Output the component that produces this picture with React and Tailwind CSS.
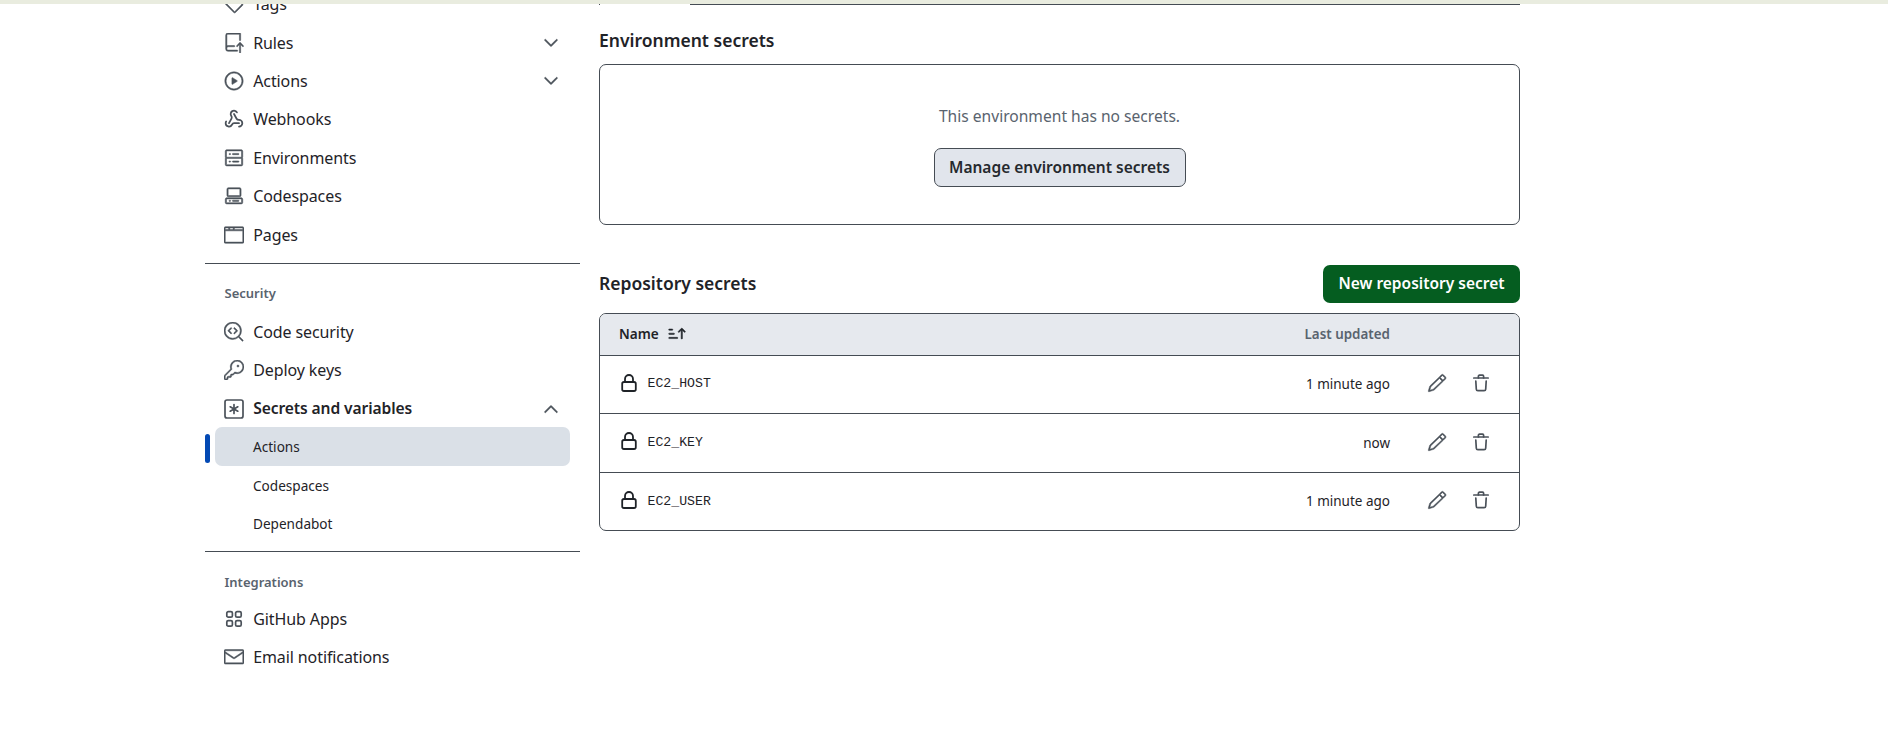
import React from "react";
import {
  GoTag, GoRepoPush, GoPlay, GoServer, GoCodespaces, GoBrowser,
  GoCodescan, GoKey, GoMail, GoChevronDown, GoChevronUp,
  GoPencil, GoSortAsc,
} from "react-icons/go";

const font = "font-['Noto_Sans','Open_Sans',sans-serif]";

function GoWebhook({ className }) {
  return (
    <svg viewBox="0 0 24 24" fill="none" stroke="currentColor" className={className}>
      <g strokeWidth="2.1" strokeLinecap="round" strokeLinejoin="round">
        <path d="M18 16.98h-5.99c-1.1 0-1.95.94-2.48 1.9A4 4 0 0 1 2 17c.01-.7.2-1.4.57-2" />
        <path d="m6 17 3.13-5.78c.53-.97.1-2.18-.5-3.1a4 4 0 1 1 6.89-4.06" />
        <path d="m12 6 3.13 5.73C15.66 12.7 16.9 13 18 13a4 4 0 0 1 0 8" />
      </g>
    </svg>
  );
}

function GoKeyAsterisk({ className }) {
  return (
    <svg viewBox="0 0 20 20" fill="none" stroke="currentColor" className={className}>
      <rect x="1" y="1" width="18" height="18" rx="2" strokeWidth="1.7" />
      <path d="M10 5.6v8.8M6.2 7.8l7.6 4.4M13.8 7.8l-7.6 4.4" strokeWidth="1.7" strokeLinecap="round" />
    </svg>
  );
}

function GoApps({ className }) {
  return (
    <svg viewBox="0 0 20 20" fill="none" stroke="currentColor" className={className}>
      <g strokeWidth="1.7">
        <rect x="2.8" y="2.6" width="5.6" height="5.6" rx="1.5" />
        <rect x="11.6" y="2.6" width="5.6" height="5.6" rx="1.5" />
        <rect x="2.8" y="11.6" width="5.6" height="5.6" rx="1.5" />
        <rect x="11.6" y="11.6" width="5.6" height="5.6" rx="1.5" />
      </g>
    </svg>
  );
}

function TrashIcon({ className }) {
  return (
    <svg viewBox="0 0 20 20" fill="none" stroke="currentColor" className={className}>
      <g strokeWidth="1.7" strokeLinecap="round" strokeLinejoin="round">
        <path d="M2.8 5h14.4" />
        <path d="M7.4 5V3.2a1 1 0 0 1 1-1h3.2a1 1 0 0 1 1 1V5" />
        <path d="M4.8 8l.5 8.2a1.6 1.6 0 0 0 1.6 1.5h6.2a1.6 1.6 0 0 0 1.6-1.5L15.2 8" />
      </g>
    </svg>
  );
}

function LockIcon({ className }) {
  return (
    <svg viewBox="0 0 20 20" fill="none" stroke="currentColor" className={className}>
      <g strokeWidth="1.8" strokeLinejoin="round">
        <rect x="3.2" y="9" width="13.6" height="9" rx="1.8" />
        <path d="M6 9V6a4 4 0 0 1 8 0v3" />
      </g>
    </svg>
  );
}

const thick = "[stroke-width:0.6]";

function Item({ icon: Icon, label, chevron, bold }) {
  return (
    <div className="flex h-[38.4px] items-center pl-[18.6px] pr-[18.5px]">
      <Icon className={`w-[20px] h-[20px] text-[#4b525a] shrink-0 ${thick}`} />
      <span className={`ml-[9.6px] flex-1 text-[#1f2328] ${bold ? "font-semibold text-[15.6px] tracking-[-0.1px]" : "text-[16px] tracking-[-0.1px]"}`}>{label}</span>
      {chevron === "down" && <GoChevronDown className={`w-[22px] h-[22px] text-[#4b525a] ${thick}`} />}
      {chevron === "up" && <GoChevronUp className={`w-[22px] h-[22px] text-[#4b525a] ${thick}`} />}
    </div>
  );
}

function SubItem({ label, active }) {
  return (
    <div className="relative h-[38.4px] flex items-center">
      {active && <div className="absolute left-0 top-[7px] w-[5px] h-[29px] rounded-[3px] bg-[#0349b4]" />}
      <div className={`ml-[10px] mr-[10px] flex-1 h-[39px] flex items-center rounded-[7px] pl-[38px] pt-[3px] text-[13.6px] text-[#1f2328] ${active ? "bg-[#dae0e7]" : ""}`}>{label}</div>
    </div>
  );
}

function SectionLabel({ children }) {
  return <div className="h-[38.4px] flex items-center pl-[19.5px] text-[13px] font-semibold text-[#59636e]">{children}</div>;
}

const secrets = [
  { name: "EC2_HOST", when: "1 minute ago" },
  { name: "EC2_KEY", when: "now" },
  { name: "EC2_USER", when: "1 minute ago" },
];

function Row({ name, when }) {
  return (
    <div className="flex h-[58.6px] items-center border-t border-[#454c54]">
      <LockIcon className="ml-[19px] w-[20px] h-[20px] text-[#1f2328] mb-[3px]" />
      <span className="ml-[8.5px] flex-1 font-['Liberation_Mono',monospace] text-[13.2px] text-[#1f2328]">{name}</span>
      <span className="text-[13.5px] text-[#1f2328]">{when}</span>
      <div className="ml-[37px] mr-[28px] flex items-center gap-[24px] mb-[2px]">
        <GoPencil className={`w-[20px] h-[20px] text-[#4b525a] ${thick}`} />
        <TrashIcon className="w-[20px] h-[20px] text-[#4b525a]" />
      </div>
    </div>
  );
}

export default function App() {
  return (
    <div className={`h-[739px] overflow-hidden bg-white ${font}`}>
      <div className="relative z-10 h-[4px] bg-[#e9ecdf]" />
      <div className="flex -mt-[18px] pl-[205px]">
        <aside className="w-[375px] shrink-0 -mt-[1px]">
          <Item icon={GoTag} label="Tags" />
          <Item icon={GoRepoPush} label="Rules" chevron="down" />
          <Item icon={GoPlay} label="Actions" chevron="down" />
          <Item icon={GoWebhook} label="Webhooks" />
          <Item icon={GoServer} label="Environments" />
          <Item icon={GoCodespaces} label="Codespaces" />
          <Item icon={GoBrowser} label="Pages" />
          <div className="mt-[9.6px] border-t border-[#454c54]" />
          <div className="mt-[10px]"><SectionLabel>Security</SectionLabel></div>
          <Item icon={GoCodescan} label="Code security" />
          <Item icon={GoKey} label="Deploy keys" />
          <Item icon={GoKeyAsterisk} label="Secrets and variables" chevron="up" bold />
          <div className="-mt-[1px]"><SubItem label="Actions" active /></div>
          <SubItem label="Codespaces" />
          <SubItem label="Dependabot" />
          <div className="mt-[9px] border-t border-[#454c54]" />
          <div className="mt-[11px]"><SectionLabel>Integrations</SectionLabel></div>
          <div className="-mt-[2px]">
            <Item icon={GoApps} label="GitHub Apps" />
            <Item icon={GoMail} label="Email notifications" />
          </div>
        </aside>
        <main className="ml-[19px] w-[921px] shrink-0">
          <div className="flex h-[19px] items-end">
            <div className="w-[1px] h-[5px] bg-[#454c54]" />
            <div className="w-[90px]" />
            <div className="flex-1 border-b border-[#454c54]" />
          </div>
          <h3 className="mt-[19px] h-[32px] flex items-center text-[17.5px] font-semibold text-[#1f2328]">Environment secrets</h3>
          <section className="mt-[8px] h-[161px] border border-[#454c54] rounded-[7px] flex flex-col items-center pt-[37px]">
            <p className="text-[15.6px] leading-[28px] text-[#59636e]">This environment has no secrets.</p>
            <button className="mt-[18px] h-[39px] w-[252px] rounded-[7px] border border-[#454c54] bg-[#e1e5ec] text-[15.5px] font-semibold text-[#25292e]">Manage environment secrets</button>
          </section>
          <div className="mt-[39.5px] flex items-center justify-between h-[38px]">
            <h3 className="text-[17.5px] font-semibold text-[#1f2328]">Repository secrets</h3>
            <button className="h-[38px] w-[197px] rounded-[7px] bg-[#055d20] text-[15.5px] font-semibold text-white">New repository secret</button>
          </div>
          <div className="mt-[10px] border border-[#454c54] rounded-[7px] overflow-hidden">
            <div className="flex h-[41px] items-center bg-[#e6e9ee]">
              <span className="ml-[19px] text-[13.6px] font-semibold text-[#1f2328]">Name</span>
              <GoSortAsc className={`ml-[8px] w-[20px] h-[20px] text-[#1f2328] ${thick}`} />
              <span className="ml-auto mr-[129px] text-[13.4px] font-semibold text-[#59636e]">Last updated</span>
            </div>
            {secrets.map((s) => <Row key={s.name} {...s} />)}
          </div>
        </main>
      </div>
    </div>
  );
}
